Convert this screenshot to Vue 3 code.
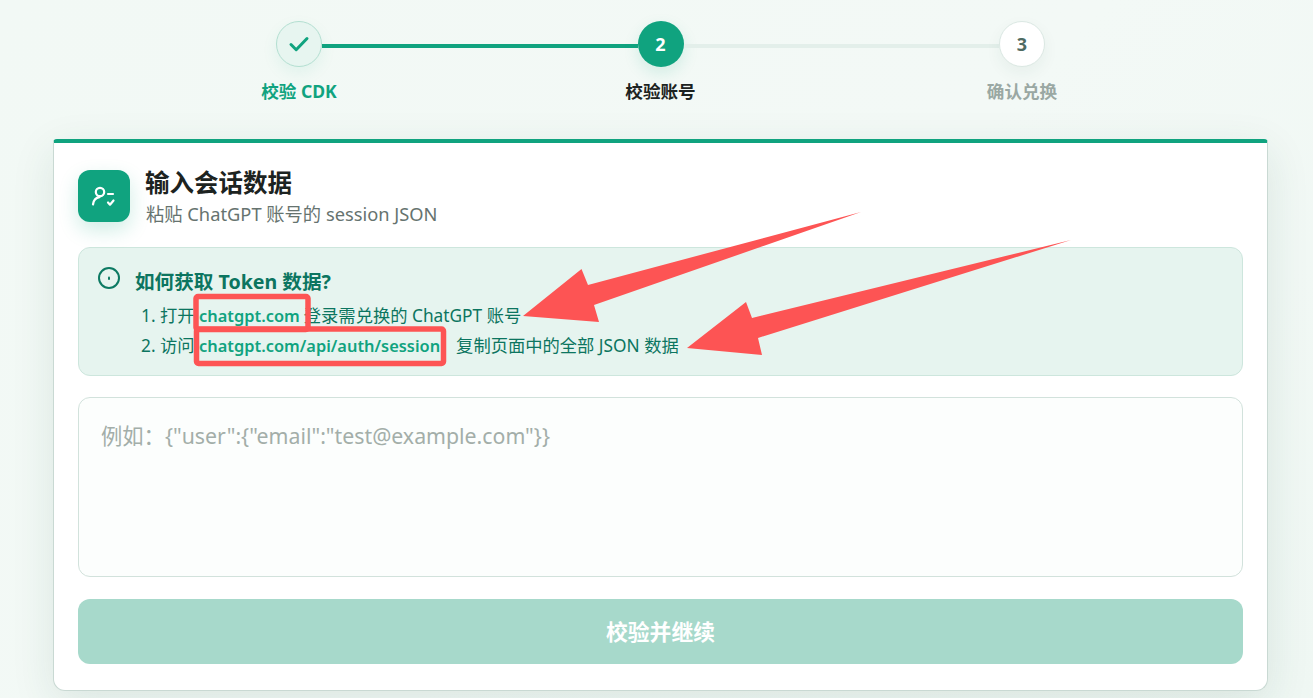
<template>
  <div class="page">
    <!-- Étapes -->
    <div class="stepper">
      <div class="dot done">
        <svg width="24" height="24" viewBox="0 0 24 24" fill="none" stroke="currentColor" stroke-width="3" stroke-linecap="round" stroke-linejoin="round">
          <path d="M4 12.500l5.200 5.200L20 6.500" />
        </svg>
      </div>
      <div class="line active"></div>
      <div class="dot current">2</div>
      <div class="line"></div>
      <div class="dot todo">3</div>
      <div class="label col1 done-text">校验 CDK</div>
      <div class="label col3 current-text">校验账号</div>
      <div class="label col5 todo-text">确认兑换</div>
    </div>

    <div class="card">
      <div class="head">
        <div class="head-icon">
          <svg width="28" height="28" viewBox="0 0 28 28" fill="none" stroke="#fff" stroke-width="2.200" stroke-linecap="round" stroke-linejoin="round">
            <circle cx="10" cy="10" r="4.200" />
            <path d="M3 22.500c.5-4 3-6.800 6.500-7.300" />
            <path d="M18 12h5" />
            <path d="M18 20.500l2 2.200 3.500-4.200" />
          </svg>
        </div>
        <div class="head-text">
          <h2>输入会话数据</h2>
          <p>粘贴 ChatGPT 账号的 session JSON</p>
        </div>
      </div>

      <div class="info">
        <svg class="info-icon" width="24" height="24" viewBox="0 0 24 24" fill="none" stroke="currentColor" stroke-width="2" stroke-linecap="round">
          <circle cx="12" cy="12" r="10" />
          <path d="M12 11.500v1.500" />
        </svg>
        <div class="info-body">
          <div class="info-title">如何获取 Token 数据?</div>
          <ol>
            <li v-for="(step, i) in steps" :key="i">
              {{ i + 1 }}. {{ step.before }} <a>{{ step.link }}</a><span :class="step.cls">{{ step.after }}</span>
            </li>
          </ol>
        </div>
      </div>

      <textarea class="input" placeholder="例如：{&quot;user&quot;:{&quot;email&quot;:&quot;test@example.com&quot;}}"></textarea>

      <button class="submit" disabled>校验并继续</button>
    </div>

    <!-- Annotations par-dessus la capture -->
    <svg class="marks" width="1313" height="698" viewBox="0 0 1313 698">
      <rect x="196" y="296.500" width="112" height="33" rx="2" />
      <rect x="196.500" y="329" width="247" height="34.500" rx="2" />
      <polygon points="861,212 588,285 581.500,269 523,316 599,322 594,305" />
      <polygon points="1071,240 752,318 746,302 687,348 762,355 758,338" />
    </svg>
  </div>
</template>

<script setup>
const steps = [
  { before: '打开', link: 'chatgpt.com', after: '登录需兑换的 ChatGPT 账号', cls: 'gap-s' },
  { before: '访问', link: 'chatgpt.com/api/auth/session', after: '复制页面中的全部 JSON 数据', cls: 'gap-l' }
];
</script>

<style>
html,
body {
  margin: 0;
  overflow: hidden;
}
</style>

<style scoped>
.page {
  position: relative;
  box-sizing: border-box;
  height: 698px;
  padding-top: 21px;
  background: linear-gradient(135deg, #f2f9f5 0%, #f3f9f6 55%, #eff7f3 100%);
  font-family: "Noto Sans", "Noto Sans CJK SC", sans-serif;
  overflow: hidden;
}

/* Étapes */
.stepper {
  display: grid;
  grid-template-columns: 46px 1fr 46px 1fr 46px;
  grid-template-rows: 46px auto;
  row-gap: 12px;
  align-items: center;
  width: 769px;
  margin: 0 auto 36px 276px;
}

.dot {
  box-sizing: border-box;
  width: 46px;
  height: 46px;
  border-radius: 50%;
  display: flex;
  align-items: center;
  justify-content: center;
  font-size: 18px;
  font-weight: 700;
}

.dot.done {
  background: #e7f5f0;
  border: 1px solid #b3dfd1;
  color: #10a37f;
  box-shadow: 0 6px 16px rgba(16, 163, 127, 0.08);
}

.dot.current {
  background: #10a37f;
  color: #fff;
  box-shadow: 0 6px 16px rgba(16, 163, 127, 0.14);
}

.dot.todo {
  background: #fff;
  border: 1px solid #dbe8e3;
  color: #4f6b63;
  box-shadow: 0 6px 16px rgba(40, 90, 75, 0.06);
}

.line {
  height: 4px;
  margin-top: 4px;
  background: #e3efea;
}

.line.active {
  background: #10a37f;
}

.label {
  grid-row: 2;
  justify-self: center;
  white-space: nowrap;
  font-size: 17.600px;
  line-height: 24px;
  font-weight: 700;
}

.col1 { grid-column: 1; }
.col3 { grid-column: 3; }
.col5 { grid-column: 5; }

.done-text { color: #10a37f; }
.current-text { color: #1c2321; }
.todo-text { color: #9aa8a3; }

/* Carte */
.card {
  box-sizing: border-box;
  width: 1215px;
  height: 552px;
  margin-left: 53px;
  padding: 27px 24px 27px;
  background: #fff;
  border: 1px solid #c9d9d3;
  border-top: 4px solid #10a37f;
  border-radius: 4px 4px 12px 12px;
  box-shadow: 0 12px 44px rgba(30, 80, 65, 0.11);
}

.head {
  display: flex;
  align-items: flex-start;
  gap: 16px;
  height: 52px;
  margin-bottom: 25px;
}

.head-icon {
  width: 52px;
  height: 52px;
  border-radius: 12px;
  background: #10a37f;
  display: flex;
  align-items: center;
  justify-content: center;
  box-shadow: 0 8px 20px rgba(16, 163, 127, 0.2);
}

.head-text {
  margin-top: -2px;
}

h2 {
  margin: 0 0 0 -1px;
  font-size: 24.500px;
  line-height: 30px;
  font-weight: 700;
  color: #1c2321;
}

.head p {
  margin: 3px 0 0;
  font-size: 18.300px;
  line-height: 26px;
  color: #66736f;
}

/* Encadré d'aide */
.info {
  box-sizing: border-box;
  display: flex;
  gap: 14px;
  height: 129px;
  padding: 18px;
  background: #e6f4ef;
  border: 1px solid #cde6dd;
  border-radius: 12px;
  margin-bottom: 21px;
}

.info-icon {
  flex: none;
  color: #0d7a63;
}

.info-body {
  padding-top: 1px;
}

.info-title {
  font-size: 19.600px;
  line-height: 30px;
  font-weight: 700;
  color: #0c7560;
}

ol {
  margin: 4px 0 0;
  padding: 0 0 0 6px;
  list-style: none;
  font-size: 17.300px;
  line-height: 30px;
  color: #0c7560;
}

li {
  white-space: nowrap;
}

a {
  color: #10a37f;
  font-size: 16.400px;
  font-weight: 600;
}

.gap-s { margin-left: 4px; }
.gap-l { margin-left: 16px; }

.input {
  display: block;
  box-sizing: border-box;
  width: 100%;
  height: 180px;
  padding: 23px 22px;
  margin-bottom: 22px;
  background: #fcfefd;
  border: 1px solid #d2e2dc;
  border-radius: 12px;
  font-family: inherit;
  font-size: 21.300px;
  line-height: 30px;
  resize: none;
  outline: none;
}

.input::placeholder {
  color: #a3aea9;
}

.submit {
  display: block;
  width: 100%;
  height: 65px;
  padding: 0 0 2px;
  border: none;
  border-radius: 12px;
  background: #a7d9cb;
  color: #fff;
  font-family: inherit;
  font-size: 21.800px;
  font-weight: 700;
}

.marks {
  position: absolute;
  left: 0;
  top: 0;
  pointer-events: none;
}

.marks rect {
  fill: none;
  stroke: #fd5454;
  stroke-width: 5.500;
}

.marks polygon {
  fill: #fd5454;
}
</style>
